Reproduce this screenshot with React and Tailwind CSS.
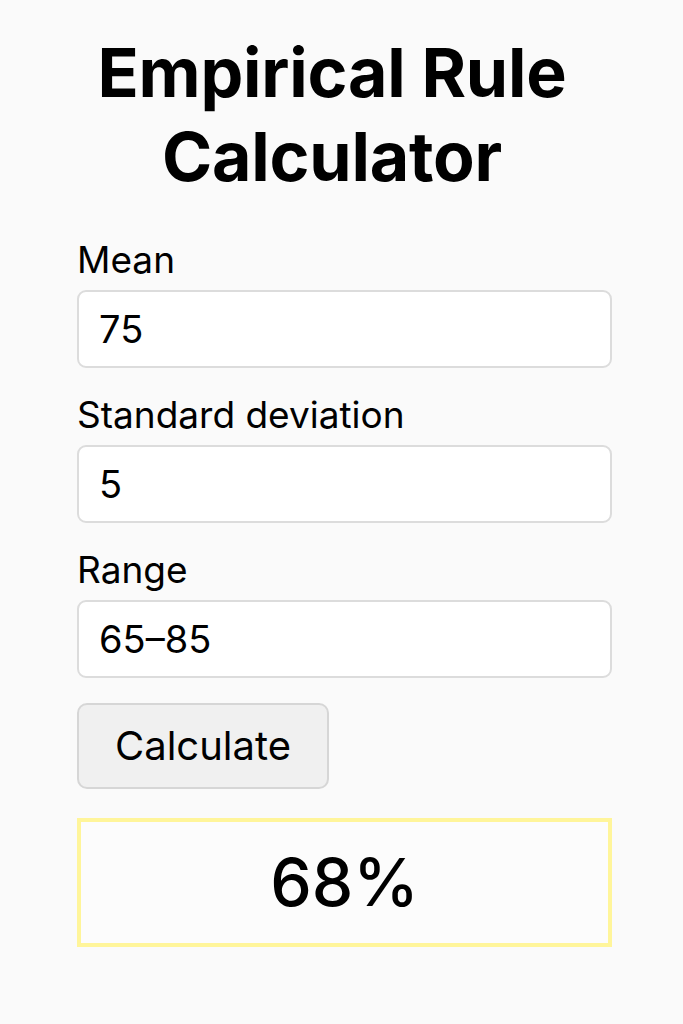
export default function App() {
  const fields = [
    { label: "Mean", value: "75" },
    { label: "Standard deviation", value: "5" },
    { label: "Range", value: "65–85" },
  ];
  return (
    <div
      className="min-h-[1024px] w-full bg-[#fafafa] text-black"
      style={{ fontFamily: "Inter, 'Noto Sans', sans-serif" }}
    >
      <div className="flex flex-col pl-[77px] pr-[71px] pt-[30px]">
        <h1 className="mr-[25px] text-center text-[68px] font-bold leading-[84px] tracking-[-0.2px]">
          Empirical Rule
          <br />
          Calculator
        </h1>
        <div className="mt-[42px] flex flex-col gap-[27px]">
          {fields.map((f) => (
            <div key={f.label} className="flex flex-col">
              <label className="mb-[10px] text-[37px] leading-[40px]">{f.label}</label>
              <div className="flex h-[78px] items-center rounded-[9px] border-2 border-[#dcdcdc] bg-white pl-[20px] text-[38px]">
                {f.value}
              </div>
            </div>
          ))}
        </div>
        <div className="mt-[25px] flex">
          <button className="flex h-[86px] w-[252px] items-center justify-center rounded-[10px] border-2 border-[#d6d6d6] bg-[#f0f0f0] text-[40px]">
            Calculate
          </button>
        </div>
        <div className="mt-[29px] flex h-[129px] items-center justify-center border-[4px] border-[#fff59a] bg-[#fcfcfc] text-[66px] font-medium">
          68%
        </div>
      </div>
    </div>
  );
}
